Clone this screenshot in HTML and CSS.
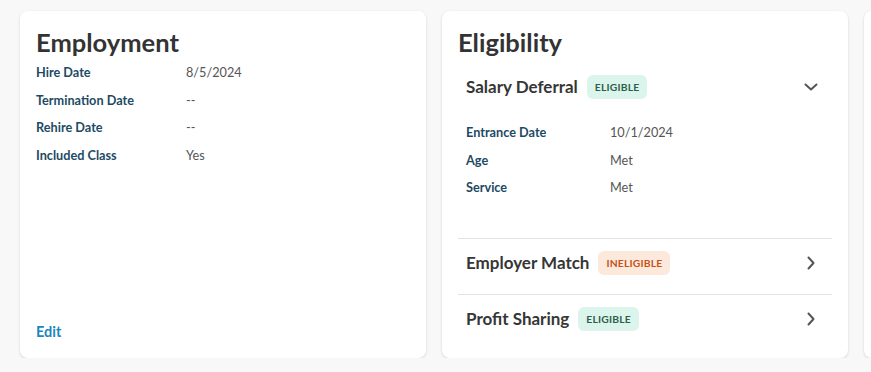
FILE: index.html
```html
<!DOCTYPE html>
<html>
<head>
    <title>Participant</title>
    <link rel="stylesheet" href="styles.css">
</head>
<body>
    <div class="cards">
        <div class="card">
            <h2 class="card-title">Employment</h2>
            <div class="info-list">
                <div class="info-row"><span class="info-label">Hire Date</span><span class="info-value">8/5/2024</span></div>
                <div class="info-row"><span class="info-label">Termination Date</span><span class="info-value">--</span></div>
                <div class="info-row"><span class="info-label">Rehire Date</span><span class="info-value">--</span></div>
                <div class="info-row"><span class="info-label">Included Class</span><span class="info-value">Yes</span></div>
            </div>
            <a class="edit-link" href="#">Edit</a>
        </div>

        <div class="card card-tight">
            <h2 class="card-title">Eligibility</h2>

            <div class="plan">
                <div class="plan-header">
                    <span class="plan-name">Salary Deferral</span>
                    <span class="badge badge-ok">ELIGIBLE</span>
                    <svg class="chevron" width="14" height="14" viewBox="0 0 14 14"><path d="M1.5 4.5 L7 9.5 L12.5 4.5" fill="none" stroke="#555" stroke-width="2" stroke-linecap="round" stroke-linejoin="round"/></svg>
                </div>
                <div class="info-list plan-details">
                    <div class="info-row"><span class="info-label">Entrance Date</span><span class="info-value">10/1/2024</span></div>
                    <div class="info-row"><span class="info-label">Age</span><span class="info-value">Met</span></div>
                    <div class="info-row"><span class="info-label">Service</span><span class="info-value">Met</span></div>
                </div>
            </div>

            <div class="plan">
                <div class="plan-header">
                    <span class="plan-name">Employer Match</span>
                    <span class="badge badge-no">INELIGIBLE</span>
                    <svg class="chevron" width="14" height="14" viewBox="0 0 14 14"><path d="M4.5 1.5 L9.5 7 L4.5 12.5" fill="none" stroke="#555" stroke-width="2" stroke-linecap="round" stroke-linejoin="round"/></svg>
                </div>
            </div>

            <div class="plan">
                <div class="plan-header">
                    <span class="plan-name">Profit Sharing</span>
                    <span class="badge badge-ok">ELIGIBLE</span>
                    <svg class="chevron" width="14" height="14" viewBox="0 0 14 14"><path d="M4.5 1.5 L9.5 7 L4.5 12.5" fill="none" stroke="#555" stroke-width="2" stroke-linecap="round" stroke-linejoin="round"/></svg>
                </div>
            </div>
        </div>

        <div class="card"></div>
    </div>
</body>
</html>
```

FILE: styles.css
```css
/* Halaman */
body {
    margin: 0;
    font-family: Lato, "Open Sans", Arial, sans-serif;
    background-color: #f8f8f8;
    overflow: hidden;
}

.cards {
    display: flex;
    gap: 16px;
    padding: 11px 0 0 20px;
    overflow: hidden;
}

.card {
    flex: 0 0 406px;
    height: 347px;
    box-sizing: border-box;
    display: flex;
    flex-direction: column;
    padding: 16px 16px 18px;
    background-color: #fff;
    border-radius: 8px;
    box-shadow: 0 1px 3px rgba(0, 0, 0, 0.14);
}

.card-tight {
    padding-bottom: 8px;
}

.card-title {
    margin: 0;
    font-size: 25.5px;
    line-height: 30px;
    font-weight: bold;
    color: #333;
}

/* Baris label + nilai */
.info-list {
    display: flex;
    flex-direction: column;
    gap: 10.6px;
    margin-top: 7px;
}

.info-row {
    display: flex;
    font-size: 12.7px;
    line-height: 17px;
}

.info-label {
    flex: 0 0 150px;
    font-weight: bold;
    color: #1d4a64;
}

.info-value {
    color: #555;
}

.edit-link {
    margin-top: auto;
    font-size: 14.5px;
    line-height: 17px;
    font-weight: bold;
    color: #1a87bb;
    text-decoration: none;
}

/* Bagian eligibility */
.plan {
    border-top: 1px solid #e2e2e2;
}

.plan:first-of-type {
    border-top: none;
    margin-top: 6px;
}

.plan-header {
    display: flex;
    align-items: center;
    gap: 9px;
    padding: 12px 14px 19px 8px;
}

.plan-name {
    font-size: 17px;
    line-height: 24px;
    font-weight: bold;
    color: #363636;
}

.badge {
    height: 24px;
    line-height: 24px;
    padding: 0 8px;
    border-radius: 6px;
    font-size: 10.3px;
    font-weight: bold;
    letter-spacing: 0.2px;
}

.badge-ok {
    background-color: #dcf5ec;
    color: #2f5d4b;
}

.badge-no {
    background-color: #fde9dc;
    color: #c2511a;
}

.chevron {
    margin-left: auto;
}

.plan-details {
    margin-top: 0;
    padding: 6px 8px 42px;
    gap: 10.5px;
}

.plan-details .info-label {
    flex-basis: 144px;
}
```
